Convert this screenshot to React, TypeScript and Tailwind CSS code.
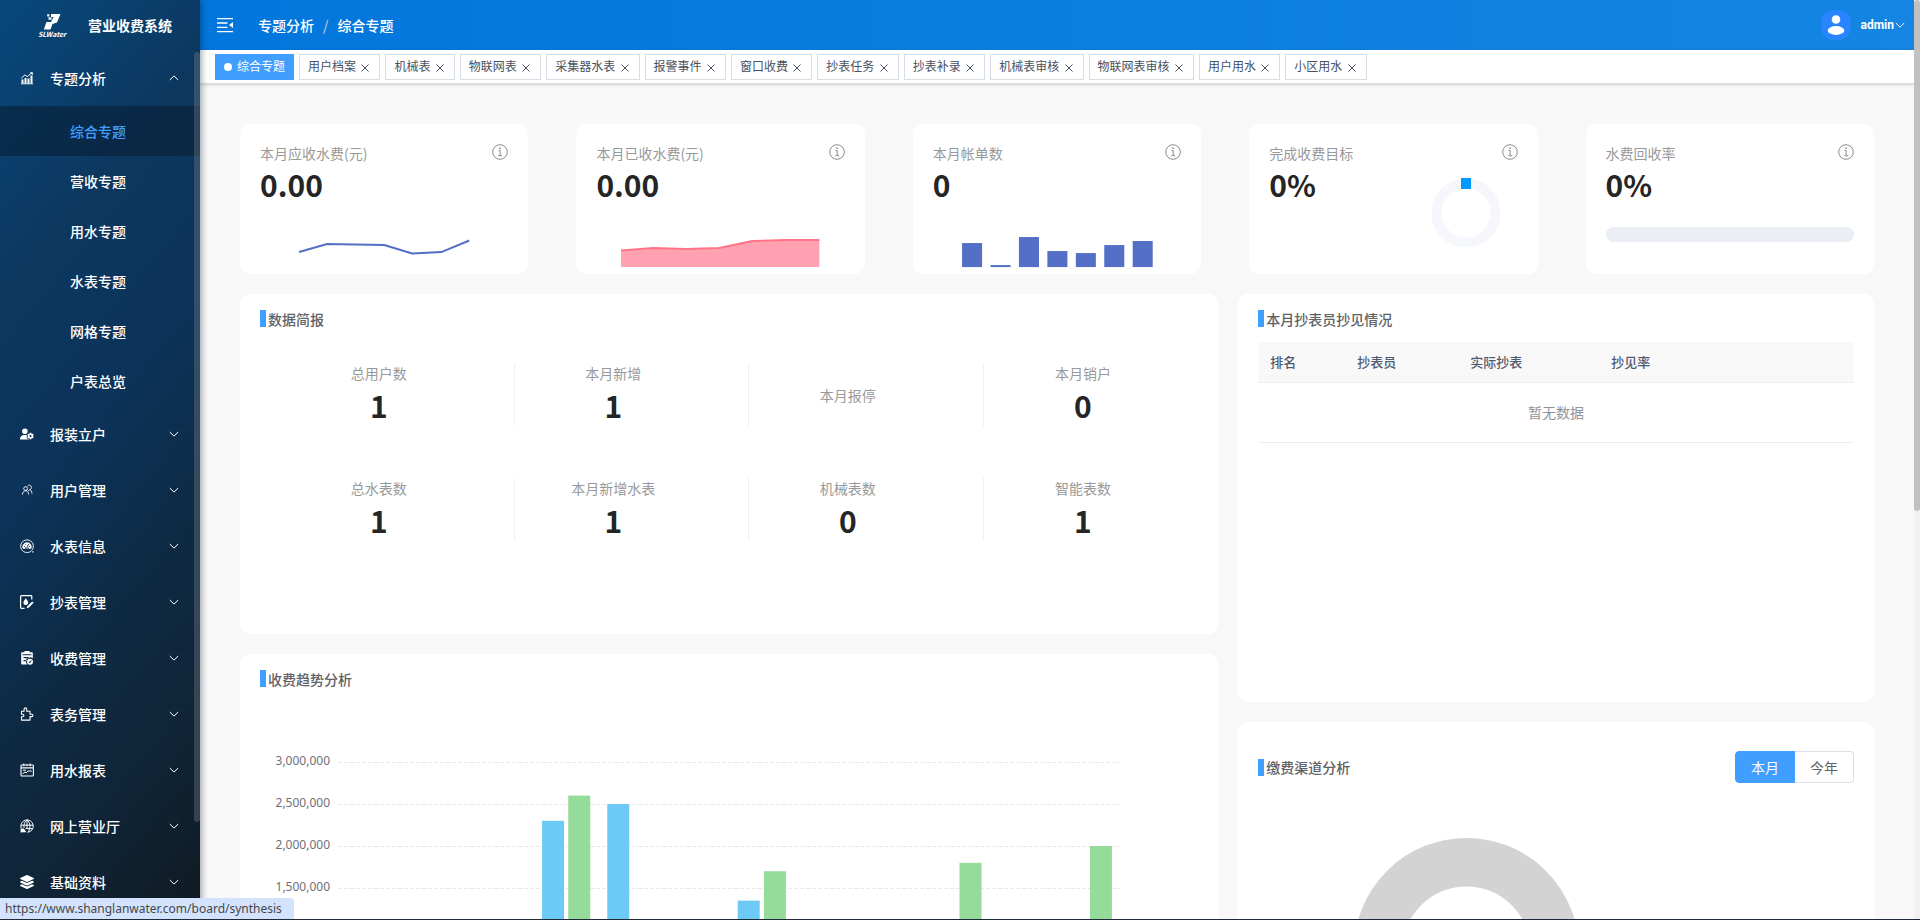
import { useState } from "react";
import type { ReactNode } from "react";
import { FaLayerGroup } from "react-icons/fa";
import { FaUserGear } from "react-icons/fa6";

const subMenus = ["综合专题", "营收专题", "用水专题", "水表专题", "网格专题", "户表总览"];

const tabs = [
  "用户档案",
  "机械表",
  "物联网表",
  "采集器水表",
  "报警事件",
  "窗口收费",
  "抄表任务",
  "抄表补录",
  "机械表审核",
  "物联网表审核",
  "用户用水",
  "小区用水",
];

const stats = [
  { label: "总用户数", value: "1" },
  { label: "本月新增", value: "1" },
  { label: "本月报停", value: "" },
  { label: "本月销户", value: "0" },
  { label: "总水表数", value: "1" },
  { label: "本月新增水表", value: "1" },
  { label: "机械表数", value: "0" },
  { label: "智能表数", value: "1" },
];

// month is zero based, paid is the blue bar and billed the green one
const trend = [
  { month: 3, paid: 2300000, billed: 2600000 },
  { month: 4, paid: 2500000, billed: 0 },
  { month: 6, paid: 1350000, billed: 1700000 },
  { month: 9, paid: 0, billed: 1800000 },
  { month: 11, paid: 0, billed: 2000000 },
];

const ticks = [3000000, 2500000, 2000000, 1500000];

const billBars = [33, 55, 27, 41, 43, 35, 31];

/* ---------- icons ---------- */

const ChartIcon = () => (
  <svg viewBox="0 0 14 14" className="size-3.5" fill="currentColor">
    <path d="M1.5 8.5h2V12h-2zM4.5 7h2v5h-2zM7.5 7.5h2V12h-2zM10.5 4.5h2V12h-2zM1 12.3h12v.9H1z" />
    <path d="M1.3 7.2 4.8 4l2.6 1.6 4.3-3.8" fill="none" stroke="currentColor" strokeWidth="1" />
    <path d="M9.8 1.2h3v3z" />
  </svg>
);

const UsersIcon = () => (
  <svg viewBox="0 0 14 14" className="size-3.5" fill="none" stroke="currentColor" strokeWidth="0.9">
    <circle cx="5.6" cy="5.6" r="1.9" />
    <path d="M2.4 11.6c.2-2.4 1.4-3.8 3.2-3.8 1.4 0 2.2.8 2.8 2.2M7.4 3.4c.5-.9 1.2-1.2 2-1.2 1.2 0 2 1 2 2.2 0 1.1-.7 2.1-1.7 2.4 1.4.4 2.2 1.8 2.3 3.8M9.6 6.8l-1.3 1M8.4 10.2l.2 1.4" />
  </svg>
);

const GaugeIcon = () => (
  <svg viewBox="0 0 14 14" className="size-3.5" fill="none" stroke="currentColor">
    <path d="M11.7 11.6A6.4 6.4 0 1 1 13.4 7c0 1.6-.5 3-1.3 4.1" strokeWidth="0.9" />
    <path d="M2.8 9.8a4.6 4.6 0 1 1 8.4 0z" fill="currentColor" stroke="none" />
    <path d="M4.2 7.4h1M5.2 5.1l.6.7M8.8 5.1 7 7.9M9 7.4h1M5 9h4" stroke="#0e2d48" strokeWidth="0.9" />
    <path d="M12 12.9h1.6" strokeWidth="1" />
  </svg>
);

const ReadMeterIcon = () => (
  <svg viewBox="0 0 14 14" className="size-3.5" fill="none" stroke="currentColor">
    <path d="M11.8 4.4V1.4a.8.8 0 0 0-.8-.8H1.4a.8.8 0 0 0-.8.8v11.2c0 .4.4.8.8.8h3.2" strokeWidth="1.2" />
    <path
      d="M5.8 3.2c1.5 2 2.4 3.3 2.4 4.5a2.4 2.4 0 0 1-4.8 0c0-1.2.9-2.5 2.4-4.5z"
      fill="currentColor"
      stroke="none"
    />
    <path d="m6.8 13.2.5-1.9 4.9-4.9 1.4 1.4-4.9 4.9z" fill="currentColor" stroke="none" />
  </svg>
);

const ClipboardIcon = () => (
  <svg viewBox="0 0 14 14" className="size-3.5" fill="currentColor">
    <path
      fillRule="evenodd"
      d="M4.5 0h5v1.2H12c.5 0 .8.3.8.8v5.2A3.6 3.6 0 0 0 7.2 13.5H2a.8.8 0 0 1-.8-.8V2c0-.5.3-.8.8-.8h2.5zM2.5 3.2v1h9v-1zM3.5 6v1.2h6V6zm0 3v1.2h3V9z"
    />
    <path
      fillRule="evenodd"
      d="M10 7.8a3 3 0 1 1 0 6 3 3 0 0 1 0-6zm-1.5 3.1 1.3 1.3 2-2.4-.7-.5-1.4 1.6-.6-.6z"
    />
  </svg>
);

const PuzzleIcon = () => (
  <svg viewBox="0 0 14 14" className="size-3.5" fill="none" stroke="currentColor" strokeWidth="1.1">
    <path
      d="M1.5 4.2h2.600V2.200a1.300 1.300 0 0 1 2.600 0v2H10v3h1.700a1.200 1.200 0 0 1 0 2.400H10v3.500H1.500V9.700h1.200a1.200 1.200 0 0 0 0-2.400H1.500z"
      strokeLinejoin="round"
    />
  </svg>
);

const ReportIcon = () => (
  <svg viewBox="0 0 14 14" className="size-3.5" fill="none" stroke="currentColor" strokeWidth="1.1">
    <rect x="1" y="2" width="12.4" height="11" rx="0.8" />
    <path d="M1 4.9h12M3.8.6v2.600M10.200.6v2.600M6 2h2" />
    <path d="M2.5 10.8 5 9l1.2.8L8.2 8h3.6M3 7.2h3" strokeWidth="1" />
  </svg>
);

const GlobeIcon = () => (
  <svg viewBox="0 0 14 14" className="size-3.5" fill="none" stroke="currentColor" strokeWidth="1">
    <path d="M1.2 9.2A6.2 6.2 0 1 1 7.6 13.3M.8 6.2h12.4M7 .8v8.4M7 .8c-2.4 2-3.4 4.6-3 8M7 .8c3.4 3.4 4 7.6 1.2 12M5.5 9.6h6.9" />
    <path d="M.6 9.4h3.2l2.6 3.8H2.2L.6 13.8z" fill="currentColor" stroke="none" />
  </svg>
);

const InfoIcon = () => (
  <svg viewBox="0 0 16 16" className="size-4" fill="none" stroke="#8c8c8c" strokeWidth="1">
    <circle cx="8" cy="8" r="7.3" />
    <path d="M6.5 6.5h1.7v5M6.2 11.7h4" />
    <circle cx="8" cy="4.2" r="0.9" fill="#8c8c8c" stroke="none" />
  </svg>
);

const Chevron = ({ up = false }: { up?: boolean }) => (
  <svg viewBox="0 0 10 6" className="h-1.5 w-2.5" fill="none" stroke="currentColor" strokeWidth="1">
    <path d={up ? "M.8 5 5 .9 9.2 5" : "M.8 1 5 5.1 9.2 1"} />
  </svg>
);

const Logo = () => (
  <div className="flex w-7 flex-col items-center">
    <svg viewBox="0 0 18 17" className="h-[17px] w-[18px]" fill="#fff">
      <path d="M8 1h9.5L14 9.5 9.5 11 7.5 16.500H.8L3.500 9H8l2.500-5H8z" />
      <path d="M4.2 1.2h2.2v2.2H4.2zM5.5 4.2h3v2.5h-3z" />
    </svg>
    <span className="text-[7px] leading-2 font-bold text-white italic">SLWater</span>
  </div>
);

const menus: { label: string; icon: ReactNode }[] = [
  { label: "报装立户", icon: <FaUserGear className="size-3.5" /> },
  { label: "用户管理", icon: <UsersIcon /> },
  { label: "水表信息", icon: <GaugeIcon /> },
  { label: "抄表管理", icon: <ReadMeterIcon /> },
  { label: "收费管理", icon: <ClipboardIcon /> },
  { label: "表务管理", icon: <PuzzleIcon /> },
  { label: "用水报表", icon: <ReportIcon /> },
  { label: "网上营业厅", icon: <GlobeIcon /> },
  { label: "基础资料", icon: <FaLayerGroup className="size-3.5" /> },
];

/* ---------- shared pieces ---------- */

const SectionTitle = ({ title }: { title: string }) => (
  <h2 className="flex h-[17px] items-center gap-0.5 text-sm leading-4 font-medium text-[#606266]">
    <span className="h-[17px] w-1.5 bg-[#409eff]" />
    {title}
  </h2>
);

const SummaryCard = ({ label, value, children }: { label: string; value: string; children: ReactNode }) => (
  <section className="h-[150px] rounded-[10px] bg-white px-5 pt-5">
    <div className="flex items-start justify-between">
      <span className="text-sm leading-[18px] text-[#999]">{label}</span>
      <InfoIcon />
    </div>
    <div className="flex flex-wrap items-start justify-between">
      <span className="text-[30px] leading-11 font-bold text-[#252525]">{value}</span>
      {children}
    </div>
  </section>
);

/* ---------- layout ---------- */

const Sidebar = () => (
  <aside className="relative z-10 flex w-[200px] shrink-0 flex-col overflow-hidden bg-[linear-gradient(130deg,#08487c_0%,#0c3860_25%,#0c335a_45%,#0e2a43_65%,#0f2538_80%,#0f1a21_100%)] text-white shadow-[2px_0_6px_rgba(0,21,41,0.35)]">
    <div className="flex h-[50px] shrink-0 items-center gap-[22px] pl-[38px]">
      <Logo />
      <h1 className="text-sm leading-[18px] font-bold">营业收费系统</h1>
    </div>
    <div className="flex">
      <nav className="min-w-0 flex-1 text-sm leading-[18px] font-medium">
        <button className="flex h-14 w-full items-center pr-[15px] pl-5">
          <ChartIcon />
          <span className="ml-4 flex-1 text-left">专题分析</span>
          <Chevron up />
        </button>
        <ul className="-mr-1.5">
          {subMenus.map((item, index) => (
            <li key={item}>
              <a
                href="#"
                className={
                  index === 0
                    ? "flex h-[50px] items-center bg-[rgba(8,23,41,0.5)] pl-[70px] text-[#409eff]"
                    : "flex h-[50px] items-center pl-[70px]"
                }
              >
                {item}
              </a>
            </li>
          ))}
        </ul>
        {menus.map((menu) => (
          <button key={menu.label} className="flex h-14 w-full items-center pr-[15px] pl-5">
            {menu.icon}
            <span className="ml-4 flex-1 text-left">{menu.label}</span>
            <Chevron />
          </button>
        ))}
      </nav>
      <div className="relative mt-0.5 h-[770px] w-1.5 rounded-full bg-[rgba(144,147,153,0.3)]" />
    </div>
  </aside>
);

const Header = () => (
  <header className="flex h-[50px] shrink-0 items-center bg-linear-to-r from-[#0276dc] to-[#1485e1] pr-[9px] pl-[17px] text-white">
    <button aria-label="收起菜单">
      <svg viewBox="0 0 16 16" className="size-4" fill="none" stroke="currentColor" strokeWidth="1.3">
        <path d="M0 1.7h16M0 6h10.5M0 10.3h10.5M0 14.6h16" />
        <path d="M16 5v6l-4-3z" fill="currentColor" stroke="none" />
      </svg>
    </button>
    <nav className="ml-[25px] flex items-center gap-[9px] text-sm leading-[18px] font-medium">
      <a href="#">专题分析</a>
      <span className="text-[#c0c4cc]">/</span>
      <span>综合专题</span>
    </nav>
    <button className="ml-auto flex items-center font-['Roboto','Liberation_Sans',sans-serif] text-xs font-bold">
      <svg viewBox="0 0 30 30" className="mr-2.5 size-[30px]">
        <rect width="30" height="30" rx="13" fill="#2985ff" />
        <circle cx="15" cy="9.5" r="4.3" fill="#fff" />
        <ellipse cx="15" cy="20.5" rx="8.3" ry="4.4" fill="#fff" />
      </svg>
      <span className="mr-px">admin</span>
      <Chevron />
    </button>
  </header>
);

const TabBar = () => (
  <div className="flex h-[34px] shrink-0 items-start gap-[5px] border-b border-[#d8dce5] bg-white pt-1 pl-[15px] font-['Inter','Noto_Sans_CJK_SC',sans-serif] text-xs whitespace-nowrap text-[#495060] shadow-[0_1px_3px_rgba(0,0,0,0.16)]">
    <a href="#" className="flex h-[26px] items-center gap-[5px] bg-[#409eff] px-[9px] text-white">
      <span className="size-2 rounded-full bg-white" />
      综合专题
    </a>
    {tabs.map((tab) => (
      <a key={tab} href="#" className="h-[26px] border border-[#d8dce5] px-2 leading-6">
        {tab}{" "}
        <svg
          viewBox="0 0 12 12"
          className="inline size-3 align-[-3px]"
          fill="none"
          stroke="currentColor"
          strokeWidth="1"
        >
          <path d="m2.5 2.5 7 7M9.5 2.5l-7 7" />
        </svg>
      </a>
    ))}
  </div>
);

const TrendChart = () => {
  const yOf = (value: number) => 75 + ((3000000 - value) / 500000) * 42;
  const base = yOf(0);

  return (
    <svg viewBox="0 0 938 340" className="w-full font-['Noto_Sans',sans-serif]">
      {ticks.map((tick) => (
        <g key={tick}>
          <text x="70" y={yOf(tick) + 3} textAnchor="end" fontSize="12" fill="#6e7079">
            {tick.toLocaleString("en-US")}
          </text>
          <path d={`M78 ${yOf(tick) + 0.5}H860`} stroke="#e9e9e9" strokeDasharray="4 2" />
        </g>
      ))}
      {trend.map(({ month, paid, billed }) => {
        const x = 78 + month * 65.2;
        return (
          <g key={month}>
            {paid > 0 && <rect x={x + 8.4} y={yOf(paid)} width="22" height={base - yOf(paid)} fill="#6dcaf7" />}
            {billed > 0 && (
              <rect x={x + 34.6} y={yOf(billed)} width="22" height={base - yOf(billed)} fill="#95dc9a" />
            )}
          </g>
        );
      })}
    </svg>
  );
};

const ChannelCard = () => {
  const [range, setRange] = useState("本月");

  return (
    <section className="h-[420px] rounded-[10px] bg-white px-5 pt-[29px]">
      <div className="flex h-8 items-center justify-between">
        <SectionTitle title="缴费渠道分析" />
        <div className="flex text-sm leading-[30px]">
          {["本月", "今年"].map((item) => (
            <label
              key={item}
              className={
                "cursor-pointer border px-[15px] first:rounded-l-[4px] last:rounded-r-[4px] " +
                (range === item
                  ? "border-[#409eff] bg-[#409eff] text-white"
                  : "border-[#dcdfe6] text-[#606266] last:border-l-0")
              }
            >
              <input
                type="radio"
                name="range"
                className="sr-only"
                checked={range === item}
                onChange={() => setRange(item)}
              />
              {item}
            </label>
          ))}
        </div>
      </div>
      <svg viewBox="0 0 596 300" className="w-full">
        <circle cx="208.5" cy="167.5" r="88.3" fill="none" stroke="#d3d3d3" strokeWidth="48.5" />
      </svg>
    </section>
  );
};

const Dashboard = () => (
  <main className="flex-1 px-10 pt-10">
    <div className="grid grid-cols-5 gap-12">
      <SummaryCard label="本月应收水费(元)" value="0.00">
        <svg viewBox="0 0 248 58" className="mt-1 w-full">
          <path
            d="m39 42 28-8 28 .5 29 .5 28 8.5 29-1.5 28-11.5"
            fill="none"
            stroke="#5470c6"
            strokeWidth="2"
            strokeLinejoin="bevel"
          />
        </svg>
      </SummaryCard>
      <SummaryCard label="本月已收水费(元)" value="0.00">
        <svg viewBox="0 0 248 58" className="mt-1 w-full">
          <path d="M25 57V40.5L57 38l33 1 33-1 33-7 34-1h33v27z" fill="#ffa1b0" />
          <path d="M25 40.5 57 38l33 1 33-1 33-7 34-1h33" fill="none" stroke="#ff7489" strokeWidth="2" />
        </svg>
      </SummaryCard>
      <SummaryCard label="本月帐单数" value="0">
        <svg viewBox="0 0 248 58" className="mt-1 w-full">
          {billBars.map((top, index) => (
            <rect key={index} x={29 + index * 28.4} y={top} width="20" height={57 - top} fill="#5470c6" />
          ))}
        </svg>
      </SummaryCard>
      <SummaryCard label="完成收费目标" value="0%">
        <svg viewBox="0 0 70 70" className="mt-4 mr-[17px] size-[70px]">
          <circle cx="35" cy="35" r="29.5" fill="none" stroke="#f5f7fc" strokeWidth="10" />
          <rect x="30" y="0" width="10" height="11" fill="#0099ff" />
        </svg>
      </SummaryCard>
      <SummaryCard label="水费回收率" value="0%">
        <div className="mt-[21px] h-[15px] w-full rounded-full bg-[#ebeef5]" />
      </SummaryCard>
    </div>

    <div className="mt-5 grid grid-cols-[20fr_13fr] gap-5">
      <div className="flex flex-col gap-5">
        <section className="h-[340px] rounded-[10px] bg-white px-5 pt-4">
          <SectionTitle title="数据简报" />
          <div className="mt-9 -mr-5 ml-5 grid grid-cols-4 gap-y-[52px]">
            {stats.map(({ label, value }, index) => (
              <div
                key={label}
                className={
                  "flex h-[63px] flex-col items-center justify-center pr-9 " +
                  (index % 4 === 3 ? "" : "border-r border-[#f0f0f0]")
                }
              >
                <span className="text-sm leading-5 text-[#999]">{label}</span>
                {value && <span className="text-[30px] leading-11 font-bold text-[#252525]">{value}</span>}
              </div>
            ))}
          </div>
        </section>
        <section className="rounded-[10px] bg-white px-5 pt-4">
          <SectionTitle title="收费趋势分析" />
          <TrendChart />
        </section>
      </div>

      <div className="flex flex-col gap-5">
        <section className="h-[408px] rounded-[10px] bg-white px-5 pt-4">
          <SectionTitle title="本月抄表员抄见情况" />
          <table className="mt-[15px] w-full table-fixed text-left">
            <thead>
              <tr className="h-10 border-b border-[#ebeef5] bg-[#f8f8f9] text-[13px] leading-[18px] text-[#515a6e]">
                <th className="w-[87px] pl-3 font-medium">排名</th>
                <th className="w-[113px] pl-3 font-medium">抄表员</th>
                <th className="w-[141px] pl-3 font-medium">实际抄表</th>
                <th className="pl-3 font-medium">抄见率</th>
              </tr>
            </thead>
            <tbody>
              <tr className="h-[60px] border-b border-[#ebeef5]">
                <td colSpan={4} className="text-center text-sm leading-[18px] text-[#909399]">
                  暂无数据
                </td>
              </tr>
            </tbody>
          </table>
        </section>
        <ChannelCard />
      </div>
    </div>
  </main>
);

export default function App() {
  return (
    <div className="relative flex h-screen overflow-hidden border-b border-[#1f2a36] bg-[#f8f8f8] font-['Noto_Sans_CJK_SC','Noto_Sans',sans-serif]">
      <Sidebar />
      <div className="flex min-w-0 flex-1 flex-col">
        <Header />
        <TabBar />
        <Dashboard />
      </div>
      {/* page scrollbar */}
      <div className="w-1.5 shrink-0 bg-[#f1f1f1]">
        <div className="h-[511px] rounded-full bg-[#c1c1c1]" />
      </div>
      {/* link target preview */}
      <div className="absolute bottom-0 left-0 z-20 h-[21px] rounded-tr-[4px] bg-[#d3e3fd] pr-3 pl-[5px] font-['Noto_Sans',sans-serif] text-xs leading-[21px] text-[#474747]">
        https://www.shanglanwater.com/board/synthesis
      </div>
    </div>
  );
}
